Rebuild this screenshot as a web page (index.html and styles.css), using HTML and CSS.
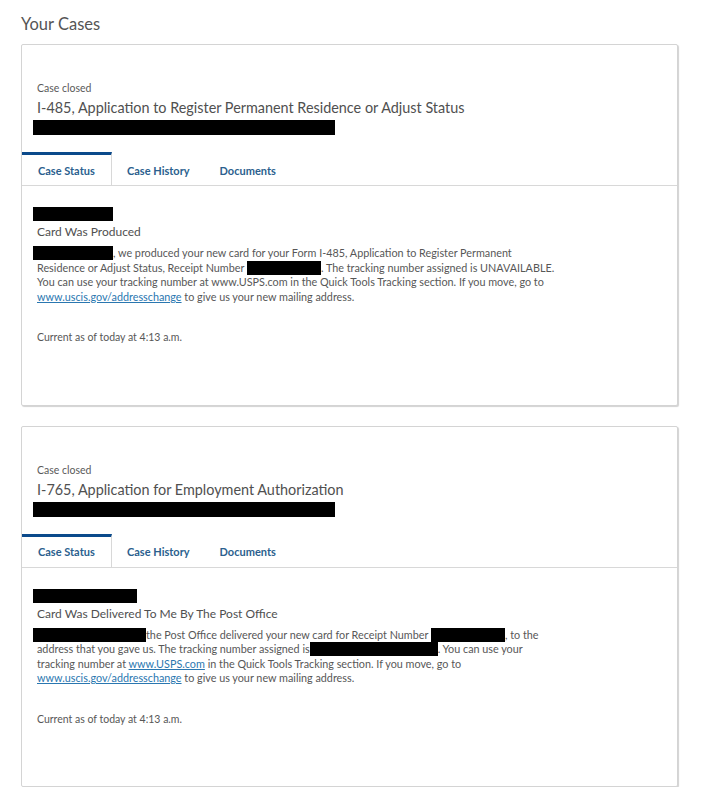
FILE: index.html
```html
<!DOCTYPE html>
<html lang="en">
<head>
<meta charset="utf-8">
<title>Your Cases</title>
<link rel="stylesheet" href="styles.css">
</head>
<body>
<main class="page">
  <h1 class="page-title">Your Cases</h1>
  <div class="cases">
    <section class="card">
      <div class="card-head">
        <div class="caption">Case closed</div>
        <div class="form-title">I-485, Application to Register Permanent Residence or Adjust Status</div>
        <span class="redact redact-head"></span>
      </div>
      <nav class="tabs">
        <a class="tab active">Case Status</a>
        <a class="tab">Case History</a>
        <a class="tab">Documents</a>
      </nav>
      <div class="card-body">
        <span class="redact redact-name"></span>
        <div class="status">Card Was Produced</div>
        <p class="msg"><span class="redact" style="width:80px"></span>, we produced your new card for your Form I-485, Application to Register Permanent<br>Residence or Adjust Status, Receipt Number <span class="redact" style="width:74px"></span>. The tracking number assigned is UNAVAILABLE.<br>You can use your tracking number at www.USPS.com in the Quick Tools Tracking section. If you move, go to<br><a class="link">www.uscis.gov/addresschange</a> to give us your new mailing address.</p>
        <p class="updated">Current as of today at 4:13 a.m.</p>
      </div>
    </section>
    <section class="card">
      <div class="card-head">
        <div class="caption">Case closed</div>
        <div class="form-title">I-765, Application for Employment Authorization</div>
        <span class="redact redact-head"></span>
      </div>
      <nav class="tabs">
        <a class="tab active">Case Status</a>
        <a class="tab">Case History</a>
        <a class="tab">Documents</a>
      </nav>
      <div class="card-body">
        <span class="redact redact-name2"></span>
        <div class="status">Card Was Delivered To Me By The Post Office</div>
        <p class="msg"><span class="redact" style="width:113px"></span>the Post Office delivered your new card for Receipt Number <span class="redact" style="width:74px"></span>, to the<br>address that you gave us. The tracking number assigned is<span class="redact" style="width:128px"></span>. You can use your<br>tracking number at <a class="link">www.USPS.com</a> in the Quick Tools Tracking section. If you move, go to<br><a class="link">www.uscis.gov/addresschange</a> to give us your new mailing address.</p>
        <p class="updated">Current as of today at 4:13 a.m.</p>
      </div>
    </section>
  </div>
</main>
</body>
</html>
```
FILE: styles.css
```css
html, body {
  margin: 0;
  background: #ffffff;
}
body {
  font-family: Lato, "Open Sans", sans-serif;
  color: #575757;
}
.page {
  padding: 13px 35px 0 21px;
}
.page-title {
  margin: 0;
  font-size: 16.5px;
  font-weight: normal;
  line-height: 22px;
  color: #555;
}
.cases {
  display: flex;
  flex-direction: column;
  gap: 20px;
  margin-top: 9px;
}
.card {
  width: 655px;
  border: 1px solid #d4d4d4;
  border-radius: 2px;
  box-shadow: 1px 1px 1px rgba(0, 0, 0, 0.18);
  background: #fff;
}
.card-head {
  padding: 36px 15px 17px 15px;
}
.caption {
  font-size: 10.5px;
  line-height: 14px;
  color: #5a5a5a;
}
.form-title {
  margin-top: 4px;
  font-size: 14.4px;
  line-height: 18px;
  color: #505050;
}
.redact {
  display: inline-block;
  background: #000;
  height: 14px;
  vertical-align: -3px;
}
.redact-head {
  display: block;
  width: 302px;
  height: 15px;
  margin: 3px 0 0 -4px;
}
.tabs {
  display: flex;
  border-bottom: 1px solid #d8d8d8;
  height: 33px;
}
.tab {
  display: flex;
  align-items: center;
  padding: 3px 15px 0 15px;
  font-size: 11px;
  font-weight: bold;
  color: #2b5f8e;
  text-decoration: none;
}
.tab.active {
  width: 57px;
  padding: 0 16px;
  border-top: 3px solid #0b4a8b;
  border-right: 1px solid #d8d8d8;
}
.card-body {
  padding: 21px 15px 60px 15px;
}
.redact-name {
  display: block;
  width: 80px;
  margin-left: -4px;
}
.redact-name2 {
  display: block;
  width: 104px;
  margin-left: -4px;
}
.status {
  margin-top: 3px;
  font-size: 12px;
  line-height: 16px;
  color: #505050;
}
.msg {
  margin: 6px 0 0 0;
  font-size: 10.8px;
  line-height: 14.5px;
  white-space: nowrap;
}
.msg > .redact:first-child {
  margin-left: -4px;
}
.link {
  color: #2a77b0;
  text-decoration: underline;
}
.updated {
  margin: 26px 0 0 0;
  font-size: 10.5px;
  line-height: 14.5px;
}
```
